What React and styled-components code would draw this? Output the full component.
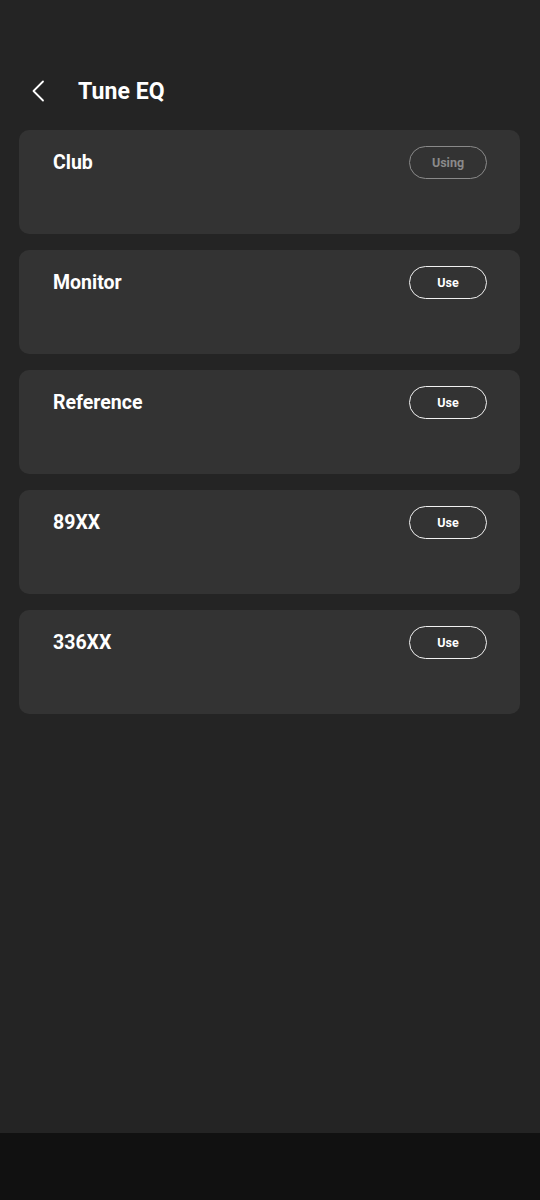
import styled, { createGlobalStyle } from "styled-components";

const GlobalStyle = createGlobalStyle`
    html, body {
        margin: 0;
        padding: 0;
        background: #242424;
    }
    body {
        font-family: Roboto, "Liberation Sans", sans-serif;
        color: #ffffff;
    }
`;

const StyledScreen = styled.div`
    width: 540px;
    height: 1200px;
    display: flex;
    flex-direction: column;
    background: #242424;
    .content {
        flex: 1;
        padding: 0 20px 0 19px;
    }
`;

const Header = styled.div`
    display: flex;
    align-items: center;
    height: 64px;
    margin-top: 59px;
    padding-left: 7px;
    margin-bottom: 7px;
    .back {
        width: 24px;
        height: 24px;
        display: flex;
        align-items: center;
        justify-content: center;
        margin-right: 28px;
    }
    h1 {
        margin: 0;
        font-size: 23px;
        font-weight: 700;
        letter-spacing: 0.1px;
    }
`;

const PresetList = styled.div`
    display: flex;
    flex-direction: column;
    gap: 16px;
`;

const PresetCard = styled.div`
    height: 104px;
    box-sizing: border-box;
    background: #333333;
    border-radius: 10px;
    display: flex;
    align-items: flex-start;
    justify-content: space-between;
    padding: 16px 33px 0 34px;
    .name {
        font-size: 19.5px;
        font-weight: 700;
        line-height: 33px;
    }
`;

const UseButton = styled.button`
    width: 78px;
    height: 33px;
    box-sizing: border-box;
    border-radius: 17px;
    background: transparent;
    border: 1.5px solid ${(p) => (p.$active ? "#8a8a8a" : "#f2f2f2")};
    color: ${(p) => (p.$active ? "#8a8a8a" : "#ffffff")};
    font-family: Roboto, "Liberation Sans", sans-serif;
    font-size: 12.5px;
    font-weight: 700;
    padding: 0;
`;

const BottomBar = styled.div`
    height: 67px;
    background: #111111;
`;

const presets = [
    { name: "Club", active: true },
    { name: "Monitor" },
    { name: "Reference" },
    { name: "89XX" },
    { name: "336XX" },
];

function App() {
    return (
        <StyledScreen>
            <GlobalStyle />
            <div className="content">
                <Header>
                    <div className="back">
                        <svg width="14" height="22" viewBox="0 0 14 22" fill="none">
                            <path d="M12 1.5 L2.5 11 L12 20.5" stroke="#ffffff" strokeWidth="1.8" strokeLinecap="round" strokeLinejoin="round" />
                        </svg>
                    </div>
                    <h1>Tune EQ</h1>
                </Header>
                <PresetList>
                    {presets.map((p) => (
                        <PresetCard key={p.name}>
                            <span className="name">{p.name}</span>
                            <UseButton $active={p.active}>{p.active ? "Using" : "Use"}</UseButton>
                        </PresetCard>
                    ))}
                </PresetList>
            </div>
            <BottomBar />
        </StyledScreen>
    );
}

export default App;
